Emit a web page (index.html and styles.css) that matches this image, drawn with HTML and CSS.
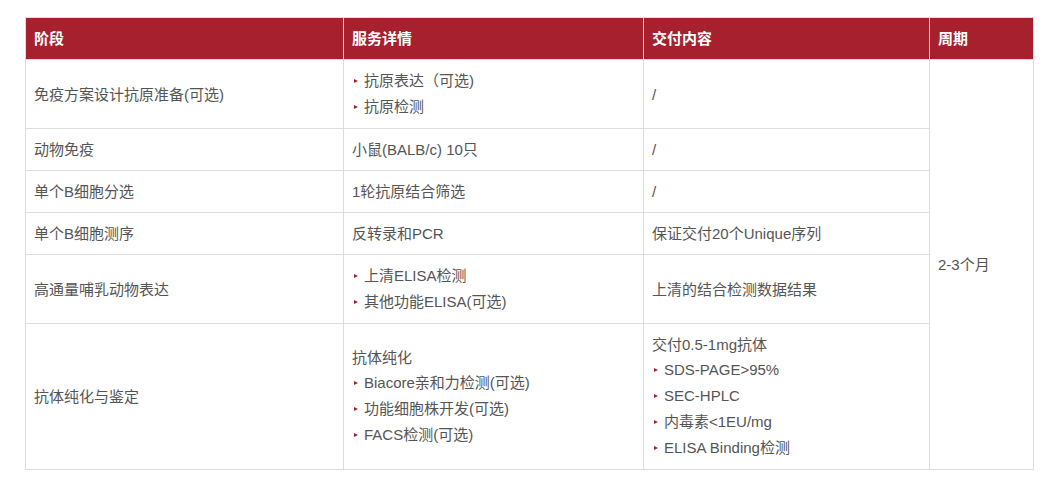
FILE: index.html
```html
<!DOCTYPE html>
<html lang="zh">
<head>
<meta charset="utf-8">
<link rel="stylesheet" href="styles.css">
</head>
<body>
<div class="wrap">
<table class="svc">
  <thead>
    <tr>
      <th class="c1">阶段</th>
      <th class="c2">服务详情</th>
      <th class="c3">交付内容</th>
      <th class="c4">周期</th>
    </tr>
  </thead>
  <tbody>
    <tr>
      <td>免疫方案设计抗原准备(可选)</td>
      <td><ul class="bl"><li>抗原表达（可选)</li><li>抗原检测</li></ul></td>
      <td>/</td>
      <td rowspan="6">2-3个月</td>
    </tr>
    <tr>
      <td>动物免疫</td>
      <td>小鼠(BALB/c) 10只</td>
      <td>/</td>
    </tr>
    <tr>
      <td>单个B细胞分选</td>
      <td>1轮抗原结合筛选</td>
      <td>/</td>
    </tr>
    <tr>
      <td>单个B细胞测序</td>
      <td>反转录和PCR</td>
      <td>保证交付20个Unique序列</td>
    </tr>
    <tr>
      <td>高通量哺乳动物表达</td>
      <td><ul class="bl"><li>上清ELISA检测</li><li>其他功能ELISA(可选)</li></ul></td>
      <td>上清的结合检测数据结果</td>
    </tr>
    <tr>
      <td>抗体纯化与鉴定</td>
      <td><p class="pl">抗体纯化</p><ul class="bl"><li>Biacore亲和力检测(可选)</li><li>功能细胞株开发(可选)</li><li>FACS检测(可选)</li></ul></td>
      <td><p class="pl">交付0.5-1mg抗体</p><ul class="bl"><li>SDS-PAGE&gt;95%</li><li>SEC-HPLC</li><li>内毒素&lt;1EU/mg</li><li>ELISA Binding检测</li></ul></td>
    </tr>
  </tbody>
</table>
</div>
</body>
</html>
```

FILE: styles.css
```css
html, body {
  margin: 0;
  padding: 0;
  background: #ffffff;
}
body {
  font-family: "Liberation Sans", Arial, "Noto Sans CJK SC", sans-serif;
  font-size: 15px;
  color: #555555;
}
.wrap {
  padding: 17px 27px 0 25px;
}
.svc {
  width: 1008px;
  border-collapse: collapse;
  table-layout: fixed;
}
.svc th, .svc td {
  border: 1px solid #dddddd;
  padding: 8px 8px 8px 8px;
  line-height: 25px;
  text-align: left;
  vertical-align: middle;
}
.svc th {
  background: #a6202e;
  color: #ffffff;
  font-weight: bold;
  padding-top: 8px;
  padding-bottom: 8px;
}
.c1 { width: 301px; }
.c2 { width: 283px; }
.c3 { width: 269px; }
.c4 { width: 87px; }
.bl {
  list-style: none;
  margin: 0;
  padding: 0;
}
.bl li {
  position: relative;
  padding-left: 12px;
  line-height: 26px;
}
.bl li::before {
  content: "";
  position: absolute;
  left: 2px;
  top: 11px;
  border-left: 4px solid #a6202e;
  border-top: 2.5px solid transparent;
  border-bottom: 2.5px solid transparent;
}
.pl {
  margin: 0;
}
```
